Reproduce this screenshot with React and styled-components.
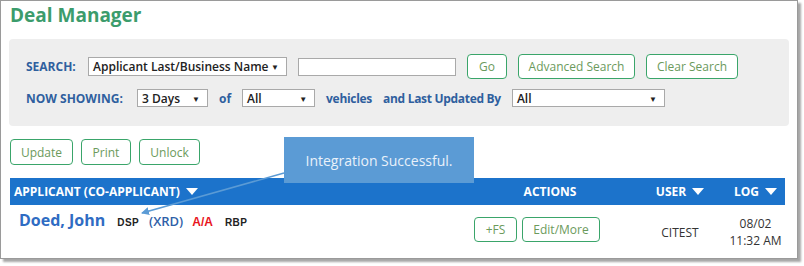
import React from "react";
import styled, { createGlobalStyle } from "styled-components";

const GlobalStyle = createGlobalStyle`
  html, body {
    margin: 0;
    padding: 0;
    background: #fff;
  }
  body {
    font-family: "Open Sans", "Liberation Sans", sans-serif;
  }
`;

const Page = styled.div`
  position: relative;
  width: 804px;
  height: 266px;
`;

const Frame = styled.div`
  box-sizing: border-box;
  width: 798px;
  height: 259px;
  border: 1px solid #9a9a9a;
  box-shadow: 3px 3px 2px rgba(0, 0, 0, 0.35);
  padding: 0 0 0 8px;
  background: #fff;
`;

const Title = styled.h1`
  margin: 0 0 0 1px;
  font-size: 19px;
  line-height: 28px;
  font-weight: 700;
  color: #3c9c6c;
`;

const SearchPanel = styled.div`
  margin-top: 10px;
  width: 780px;
  height: 87px;
  box-sizing: border-box;
  background: #eeeeee;
  border-radius: 4px;
  padding: 15px 0 0 17px;
  display: flex;
  flex-direction: column;
  gap: 10px;
`;

const FilterRow = styled.div`
  display: flex;
  align-items: center;
  gap: 11px;
  height: ${(p) => p.$h}px;
`;

const Label = styled.span`
  font-size: 12px;
  font-weight: 700;
  color: #2f5f9e;
  white-space: nowrap;
  min-width: ${(p) => p.$w || 0}px;
  letter-spacing: ${(p) => (p.$tight ? "-0.3px" : "0")};
`;

const FakeSelect = styled.div`
  box-sizing: border-box;
  width: ${(p) => p.$w}px;
  height: ${(p) => p.$h || 18}px;
  background: #fff;
  border: 1px solid #a9a9a9;
  display: flex;
  align-items: center;
  justify-content: space-between;
  padding: 0 7px 0 4px;
  font-size: 12px;
  font-weight: 600;
  color: #222;
  &::after {
    content: "▼";
    font-size: 8px;
    color: #222;
  }
`;

const TextInput = styled.div`
  box-sizing: border-box;
  width: 158px;
  height: 18px;
  background: #fff;
  border: 1px solid #a9a9a9;
`;

const Button = styled.button`
  box-sizing: border-box;
  width: ${(p) => p.$w}px;
  height: ${(p) => p.$h || 25}px;
  background: #fff;
  border: 1px solid #3aa56a;
  border-radius: 4px;
  font-family: "Open Sans", "Liberation Sans", sans-serif;
  font-size: 12px;
  color: #6b9a5c;
  padding: 0;
  cursor: pointer;
`;

const ActionBar = styled.div`
  display: flex;
  gap: 8px;
  margin: 13px 0 0 1px;
`;

const Table = styled.div`
  margin: 13px 0 0 1px;
  width: 775px;
`;

const Grid = styled.div`
  display: grid;
  grid-template-columns: 450px 180px 80px 65px;
  align-items: center;
`;

const HeaderRow = styled(Grid)`
  height: 27px;
  background: #1c73cb;
  color: #fff;
  font-size: 12px;
  font-weight: 700;
`;

const HeadCell = styled.div`
  display: flex;
  align-items: center;
  gap: 6px;
  justify-content: ${(p) => (p.$left ? "flex-start" : "center")};
  padding-left: ${(p) => p.$pl || 0}px;
`;

const Caret = styled.span`
  width: 0;
  height: 0;
  border-left: 6px solid transparent;
  border-right: 6px solid transparent;
  border-top: 7px solid #fff;
`;

const DataRow = styled(Grid)`
  height: 49px;
`;

const ApplicantCell = styled.div`
  align-self: start;
  display: flex;
  align-items: baseline;
  padding: 4px 0 0 9px;
`;

const Name = styled.span`
  font-size: 16px;
  font-weight: 700;
  color: #2f6cc3;
  margin-right: 12px;
`;

const Tag = styled.span`
  font-family: "Liberation Sans", Arial, sans-serif;
  font-weight: 700;
  font-size: ${(p) => p.$size || 10}px;
  color: ${(p) => p.$color || "#222"};
  margin-right: ${(p) => p.$mr || 0}px;
  letter-spacing: ${(p) => (p.$wide ? "0.4px" : "0")};
`;

const Xrd = styled.span`
  font-size: 13px;
  font-weight: 600;
  color: #2f5fa8;
  margin-right: 9px;
`;

const ActionsCell = styled.div`
  display: flex;
  gap: 5px;
  padding-left: 14px;
`;

const TextCell = styled.div`
  text-align: center;
  font-size: 12px;
  color: #333;
  line-height: 17px;
  padding-top: 5px;
  padding-left: ${(p) => p.$pl || 0}px;
`;

const Tooltip = styled.div`
  position: absolute;
  left: 284px;
  top: 137px;
  width: 190px;
  height: 46px;
  background: #5b9bd5;
  color: #e9f1fa;
  font-size: 14px;
  display: flex;
  align-items: center;
  justify-content: center;
`;

const Pointer = styled.svg`
  position: absolute;
  left: 0;
  top: 0;
  pointer-events: none;
`;

export default function App() {
  return (
    <Page>
      <GlobalStyle />
      <Frame>
        <Title>Deal Manager</Title>
        <SearchPanel>
          <FilterRow $h={25}>
            <Label $w={51}>SEARCH:</Label>
            <FakeSelect $w={199} $h={19}>Applicant Last/Business Name</FakeSelect>
            <TextInput />
            <Button $w={40}>Go</Button>
            <Button $w={117}>Advanced Search</Button>
            <Button $w={92}>Clear Search</Button>
          </FilterRow>
          <FilterRow $h={18}>
            <Label $w={100}>NOW SHOWING:</Label>
            <FakeSelect $w={71}>3 Days</FakeSelect>
            <Label>of</Label>
            <FakeSelect $w={73}>All</FakeSelect>
            <Label $tight>vehicles</Label>
            <Label $tight>and Last Updated By</Label>
            <FakeSelect $w={153}>All</FakeSelect>
          </FilterRow>
        </SearchPanel>
        <ActionBar>
          <Button $w={63} $h={26}>Update</Button>
          <Button $w={50} $h={26}>Print</Button>
          <Button $w={61} $h={26}>Unlock</Button>
        </ActionBar>
        <Table>
          <HeaderRow>
            <HeadCell $left $pl={4}>
              APPLICANT (CO-APPLICANT) <Caret />
            </HeadCell>
            <HeadCell>ACTIONS</HeadCell>
            <HeadCell>
              USER <Caret />
            </HeadCell>
            <HeadCell $pl={6}>
              LOG <Caret />
            </HeadCell>
          </HeaderRow>
          <DataRow>
            <ApplicantCell>
              <Name>Doed, John</Name>
              <Tag $mr={10} $wide>DSP</Tag>
              <Xrd>(XRD)</Xrd>
              <Tag $size={12} $color="#e8141c" $mr={12}>A/A</Tag>
              <Tag $wide>RBP</Tag>
            </ApplicantCell>
            <ActionsCell>
              <Button $w={43} $h={25}>+FS</Button>
              <Button $w={78} $h={25}>Edit/More</Button>
            </ActionsCell>
            <TextCell>CITEST</TextCell>
            <TextCell $pl={6}>
              08/02
              <br />
              11:32 AM
            </TextCell>
          </DataRow>
        </Table>
      </Frame>
      <Tooltip>Integration Successful.</Tooltip>
      <Pointer width="804" height="266">
        <defs>
          <marker id="head" markerWidth="8" markerHeight="8" refX="7" refY="4" orient="auto" markerUnits="userSpaceOnUse">
            <path d="M0,0 L8,4 L0,8 Z" fill="#5b9bd5" />
          </marker>
        </defs>
        <line x1="284" y1="173" x2="142" y2="213" stroke="#5b9bd5" strokeWidth="1.5" markerEnd="url(#head)" />
      </Pointer>
    </Page>
  );
}
